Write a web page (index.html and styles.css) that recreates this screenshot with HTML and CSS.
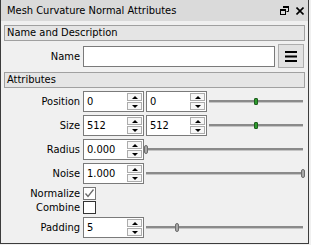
FILE: index.html
```html
<!DOCTYPE html>
<html>
<head>
    <meta charset="UTF-8">
    <title>Mesh Curvature Normal Attributes</title>
    <link rel="stylesheet" href="styles.css">
</head>
<body>
    <div class="panel">
        <div class="titlebar">
            <span class="title">Mesh Curvature Normal Attributes</span>
            <svg class="tb-icon" width="9" height="9" viewBox="0 0 9 9">
                <path d="M3 0.5h5.5v5h-2" fill="none" stroke="#000" stroke-width="1"/>
                <rect x="3" y="0" width="6" height="2" fill="#000"/>
                <rect x="0.5" y="3.5" width="5" height="5" fill="none" stroke="#000" stroke-width="1"/>
                <rect x="0" y="3" width="6" height="2" fill="#000"/>
            </svg>
            <svg class="tb-icon" width="8" height="8" viewBox="0 0 8 8">
                <path d="M0.5 0.5L7.5 7.5M7.5 0.5L0.5 7.5" stroke="#000" stroke-width="1.6"/>
            </svg>
        </div>

        <div class="content">
            <div class="section">Name and Description</div>
            <div class="row row-name">
                <label class="lbl">Name</label>
                <input class="text-input" type="text">
                <button class="menu-btn">
                    <svg width="12" height="11" viewBox="0 0 12 11">
                        <rect x="0" y="0" width="12" height="2" fill="#000"/>
                        <rect x="0" y="4.5" width="12" height="2" fill="#000"/>
                        <rect x="0" y="9" width="12" height="2" fill="#000"/>
                    </svg>
                </button>
            </div>

            <div class="section">Attributes</div>

            <div class="row">
                <label class="lbl">Position</label>
                <div class="spin"><span class="val">0</span><span class="spin-btns"><span class="up"></span><span class="down"></span></span></div>
                <div class="spin"><span class="val">0</span><span class="spin-btns"><span class="up"></span><span class="down"></span></span></div>
                <div class="slider"><span class="handle handle-green" style="left: 50%"></span></div>
            </div>
            <div class="row">
                <label class="lbl">Size</label>
                <div class="spin"><span class="val">512</span><span class="spin-btns"><span class="up"></span><span class="down"></span></span></div>
                <div class="spin"><span class="val">512</span><span class="spin-btns"><span class="up"></span><span class="down"></span></span></div>
                <div class="slider"><span class="handle handle-green" style="left: 50%"></span></div>
            </div>
            <div class="row">
                <label class="lbl">Radius</label>
                <div class="spin"><span class="val">0.000</span><span class="spin-btns"><span class="up"></span><span class="down"></span></span></div>
                <div class="slider"><span class="handle" style="left: 0%"></span></div>
            </div>
            <div class="row">
                <label class="lbl">Noise</label>
                <div class="spin"><span class="val">1.000</span><span class="spin-btns"><span class="up"></span><span class="down"></span></span></div>
                <div class="slider"><span class="handle" style="left: 100%"></span></div>
            </div>
            <div class="row row-check">
                <label class="lbl">Normalize</label>
                <span class="check checked">
                    <svg width="11" height="11" viewBox="0 0 11 11">
                        <path d="M1.5 5.5L4 8.5L9.5 1.5" fill="none" stroke="#6a6a6a" stroke-width="1.3"/>
                    </svg>
                </span>
            </div>
            <div class="row row-check">
                <label class="lbl">Combine</label>
                <span class="check"></span>
            </div>
            <div class="row row-pad">
                <label class="lbl">Padding</label>
                <div class="spin"><span class="val">5</span><span class="spin-btns"><span class="up"></span><span class="down"></span></span></div>
                <div class="slider"><span class="handle" style="left: 20%"></span></div>
            </div>
        </div>
    </div>
</body>
</html>
```

FILE: styles.css
```css
body {
    margin: 0;
    background-color: #f0f0f0;
    font-family: "DejaVu Sans Condensed", "Liberation Sans", Arial, sans-serif;
    font-size: 11px;
    color: #000;
}

.panel {
    width: 309px;
    height: 244px;
    box-sizing: border-box;
    border: 1px solid #3c3c3c;
    border-top: none;
    background: #f0f0f0;
}

.titlebar {
    height: 21px;
    background: #dadada;
    display: flex;
    align-items: center;
    gap: 7px;
    padding: 0 4px 0 6px;
}

.title {
    flex: 1;
}

.tb-icon {
    display: block;
}

.content {
    padding: 4px 3px 0 3px;
}

.section {
    height: 16px;
    box-sizing: border-box;
    border: 1px solid #a0a0a0;
    background: #e5e5e5;
    padding-left: 2px;
    line-height: 14px;
}

.row {
    display: flex;
    align-items: center;
    height: 21px;
    margin-top: 3px;
}

.row-name {
    height: 24px;
    margin-top: 3px;
    margin-bottom: 4px;
}

.row-check {
    height: 13px;
    margin-top: 3px;
}

.row-check + .row-check {
    margin-top: 1px;
}

.row-pad {
    margin-top: 3px;
}

.lbl {
    width: 76px;
    text-align: right;
    margin-right: 3px;
    flex-shrink: 0;
}

.text-input {
    width: 192px;
    height: 21px;
    box-sizing: border-box;
    border: 1px solid #7a7a7a;
    background: #fff;
    padding: 0 3px;
    margin: 0;
    font: inherit;
}

.menu-btn {
    width: 26px;
    height: 24px;
    margin: 0 0 0 3px;
    padding: 0;
    border: 1px solid #adadad;
    background: #e1e1e1;
    display: flex;
    align-items: center;
    justify-content: center;
}

.spin {
    width: 61px;
    height: 21px;
    box-sizing: border-box;
    border: 1px solid #7a7a7a;
    background: #fff;
    display: flex;
    margin-right: 2px;
    flex-shrink: 0;
}

.val {
    flex: 1;
    padding-left: 3px;
    line-height: 19px;
}

.spin-btns {
    width: 15px;
    display: flex;
    flex-direction: column;
    padding: 1px 1px 1px 0;
    gap: 1px;
}

.spin-btns span {
    flex: 1;
    border: 1px solid #acacac;
    background: #f7f7f7;
    display: flex;
    align-items: center;
    justify-content: center;
}

.spin-btns .up::before {
    content: "";
    border-left: 3px solid transparent;
    border-right: 3px solid transparent;
    border-bottom: 3px solid #000;
}

.spin-btns .down::before {
    content: "";
    border-left: 3px solid transparent;
    border-right: 3px solid transparent;
    border-top: 3px solid #000;
}

.slider {
    flex: 1;
    height: 21px;
    position: relative;
    margin-right: 2px;
}

.slider::before {
    content: "";
    position: absolute;
    left: 0;
    right: 0;
    top: 9px;
    height: 2px;
    background: #8a8a8a;
    border-bottom: 1px solid #c4c4c4;
}

.handle {
    position: absolute;
    top: 6px;
    width: 4px;
    height: 9px;
    margin-left: -2px;
    box-sizing: border-box;
    background: #a8a8a8;
    border: 1px solid #6e6e6e;
    border-radius: 2px;
}

.handle-green {
    top: 7px;
    height: 7px;
    background: #2d9a2d;
    border-color: #1f5f1f;
    border-radius: 1px;
}

.check {
    width: 13px;
    height: 13px;
    box-sizing: border-box;
    border: 1px solid #333;
    background: #fff;
    display: flex;
    align-items: center;
    justify-content: center;
}

.checked {
    border-color: #777;
}
```
